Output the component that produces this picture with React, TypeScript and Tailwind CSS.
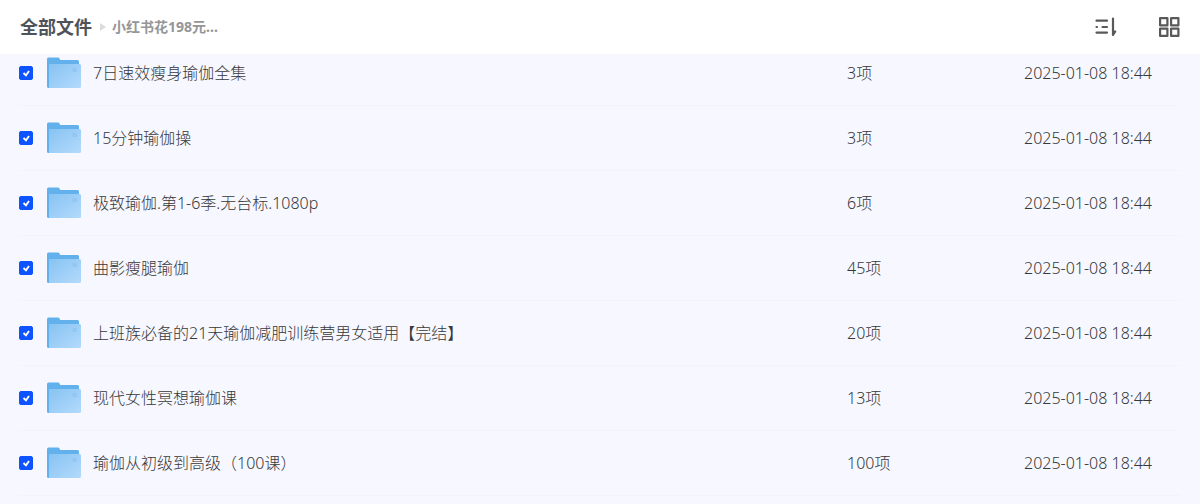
import React from 'react';

interface FileItem {
  name: string;
  count: string;
  date: string;
}

const files: FileItem[] = [
  { name: '7日速效瘦身瑜伽全集', count: '3项', date: '2025-01-08 18:44' },
  { name: '15分钟瑜伽操', count: '3项', date: '2025-01-08 18:44' },
  { name: '极致瑜伽.第1-6季.无台标.1080p', count: '6项', date: '2025-01-08 18:44' },
  { name: '曲影瘦腿瑜伽', count: '45项', date: '2025-01-08 18:44' },
  { name: '上班族必备的21天瑜伽减肥训练营男女适用【完结】', count: '20项', date: '2025-01-08 18:44' },
  { name: '现代女性冥想瑜伽课', count: '13项', date: '2025-01-08 18:44' },
  { name: '瑜伽从初级到高级（100课）', count: '100项', date: '2025-01-08 18:44' },
];

const FolderIcon: React.FC = () => (
  <svg className="block w-[34px] h-8" viewBox="0 0 34 32" aria-hidden="true">
    <defs>
      <linearGradient id="folder-front" x1="0" y1="0" x2="1" y2="1">
        <stop offset="0" stopColor="#87c3f2" />
        <stop offset="1" stopColor="#b3dafc" />
      </linearGradient>
    </defs>
    <path d="M0 2Q0 .5 1.500 .5H11Q12 .5 12.500 1.500L13.200 3H30.500Q32 3 32 4.500V31H1.500Q0 31 0 29.500Z" fill="#62b0ec" />
    <path d="M2 7H32.500Q34 7 34 8.500V29.500Q34 31 32.500 31H2Z" fill="url(#folder-front)" />
    <path d="M25.500 12H30M25.500 14H30" stroke="#86c0ef" strokeWidth="1" />
  </svg>
);

const SortIcon: React.FC = () => (
  <svg className="block w-6 h-6" viewBox="0 0 24 24" fill="none" stroke="#595959" strokeWidth="2.200" strokeLinecap="round" aria-hidden="true">
    <path d="M3.500 5.700H14M3.500 12H4M9.500 12H14M3.500 17.600H14" />
    <path d="M20 3.500V20L22.200 16.500H20" fill="#595959" strokeLinejoin="round" />
  </svg>
);

const GridIcon: React.FC = () => (
  <svg className="block w-6 h-6" viewBox="0 0 24 24" fill="none" stroke="#595959" strokeWidth="2.200" strokeLinejoin="round" aria-hidden="true">
    <path d="M3.100 3.100H10.400V10.400H3.100ZM14.100 3.100H21.400V10.400H14.100ZM3.100 13.600H10.400V20.900H3.100ZM14.100 13.600H21.400V20.900H14.100Z" />
  </svg>
);

const FileRow: React.FC<{ file: FileItem; id: string }> = ({ file, id }) => (
  <li className="flex items-center h-[65px] border-b border-[#f3f4fa] text-base font-light text-[#383838]">
    <span className="grid shrink-0 mr-3.5">
      <input
        id={id}
        type="checkbox"
        defaultChecked
        className="peer col-start-1 row-start-1 appearance-none w-3.5 h-3.5 rounded-[2px] border border-[#c4c8d0] bg-white checked:border-[#0d53ff] checked:bg-[#0d53ff]"
      />
      <svg className="col-start-1 row-start-1 w-3.5 h-3.5 pointer-events-none opacity-0 peer-checked:opacity-100" viewBox="0 0 14 14" fill="none" aria-hidden="true">
        <path d="M4.500 7L7 9.400L10 5" stroke="#fff" strokeWidth="1.900" />
      </svg>
    </span>
    <FolderIcon />
    <label htmlFor={id} className="flex-1 min-w-0 truncate ml-3">
      {file.name}
    </label>
    <span className="w-[177px] shrink-0">{file.count}</span>
    <time className="w-[156px] shrink-0">{file.date}</time>
  </li>
);

export default function App() {
  return (
    <div className="min-h-screen flex flex-col bg-[#f6f7ff] font-['Noto_Sans','Noto_Sans_CJK_SC',sans-serif]">
      <header className="relative z-10 flex items-center justify-between shrink-0 h-[54px] pl-5 pr-[19px] bg-white">
        <nav className="flex items-center font-bold" aria-label="文件路径">
          <a href="#" className="text-lg text-[#4f5358]">
            全部文件
          </a>
          <svg className="w-1.5 h-2 ml-2 mr-1.5" viewBox="0 0 6 8" aria-hidden="true">
            <path d="M0 0L6 4L0 8Z" fill="#dcdcdc" />
          </svg>
          <a href="#" className="text-sm text-[#969696]">
            小红书花198元...
          </a>
        </nav>
        <div className="flex items-center gap-10">
          <button type="button" aria-label="排序">
            <SortIcon />
          </button>
          <button type="button" aria-label="网格视图">
            <GridIcon />
          </button>
        </div>
      </header>

      {/* the list is scrolled slightly, so its first row starts under the header */}
      <ul className="-mt-[13px] pl-[19px] pr-5">
        {files.map((file, i) => (
          <FileRow key={file.name} file={file} id={`file-${i}`} />
        ))}
      </ul>
    </div>
  );
}
